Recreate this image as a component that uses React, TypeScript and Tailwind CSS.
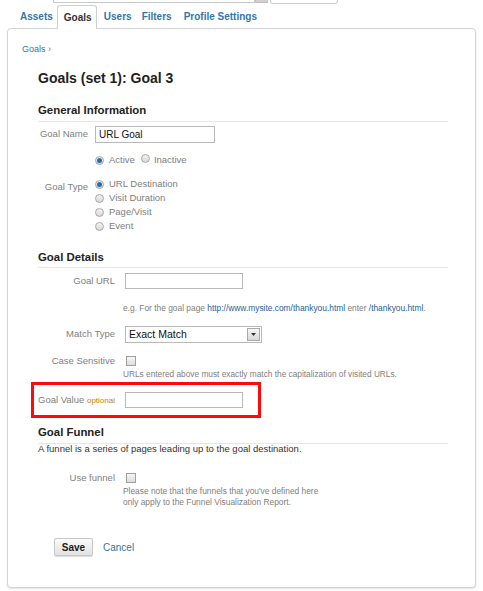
import React from "react";

const Radio = ({ on }: { on?: boolean }) => (
  <span className="inline-flex items-center justify-center w-[9px] h-[9px] rounded-full border border-[#a9a9a9] bg-gradient-to-b from-[#f4f4f4] to-[#d6d6d6] shrink-0">
    {on && <span className="w-[5px] h-[5px] rounded-full bg-[#2a6ea8]" />}
  </span>
);

const Check = () => (
  <span className="inline-block w-[10px] h-[10px] border border-[#a0a0a0] bg-gradient-to-b from-[#f6f6f6] to-[#dcdcdc] shrink-0" />
);

const Input = ({ w, value }: { w: string; value?: string }) => (
  <div className={`${w} h-[16px] border border-[#b9b9b9] bg-white flex items-center px-[3px] text-[10px] text-[#111]`}>
    {value}
  </div>
);

export default function App() {
  return (
    <div className="w-[483px] h-[591px] bg-white overflow-hidden font-['Liberation_Sans',Arial,sans-serif]">
      {/* top partial strip */}
      <div className="h-[5px] flex items-start pl-[53px]">
        <div className="w-[202px] h-[3px] border border-t-0 border-[#c8c8c8]" />
        <div className="w-[13px] h-[3px] bg-[#d0d0d0] border border-t-0 border-[#c0c0c0]" />
        <div className="ml-[2px] w-[68px] h-[4px] border border-t-0 border-[#cfcfcf] rounded-b-[3px]" />
      </div>
      {/* tabs */}
      <div className="h-[23px] flex items-end pl-[20px] text-[10px] font-bold text-[#3575a9] relative z-10">
        <div className="h-[23px] flex items-center">Assets</div>
        <div className="ml-[4px] h-[24px] mb-[-1px] flex items-center px-[6px] w-[40px] border border-b-0 border-[#cfcfcf] rounded-t-[3px] bg-white text-[#333]">
          Goals
        </div>
        <div className="ml-[7px] h-[23px] flex items-center">Users</div>
        <div className="ml-[10px] h-[23px] flex items-center">Filters</div>
        <div className="ml-[12px] h-[23px] flex items-center">Profile Settings</div>
      </div>
      {/* panel */}
      <div className="ml-[7px] w-[469px] h-[560px] border border-[#d4d4d4] rounded-[4px] shadow-[0_1px_2px_rgba(0,0,0,0.12)] bg-white">
        <div className="pl-[14px] mt-[14px] h-[12px] leading-[12px] text-[9px] text-[#3575a9]">
          Goals <span className="text-[#777]">›</span>
        </div>
        <div className="pl-[30px] pr-[27px]">
          <div className="mt-[14px] h-[18px] leading-[18px] text-[14px] font-bold text-[#222]">
            Goals (set 1): Goal 3
          </div>

          {/* General Information */}
          <div className="mt-[16px] pb-[4px] border-b border-[#e6e6e6]">
            <div className="h-[14px] leading-[14px] text-[11.4px] font-bold text-[#222]">General Information</div>
          </div>
          <div className="mt-[4px] flex items-center h-[17px]">
            <div className="w-[50px] text-right text-[9.5px] text-[#808080] whitespace-nowrap">Goal Name</div>
            <div className="ml-[7px]">
              <Input w="w-[120px] h-[17px]" value="URL Goal" />
            </div>
          </div>
          <div className="mt-[11px] h-[12px] flex items-center pl-[57px] text-[9.5px] text-[#808080]">
            <Radio on />
            <span className="ml-[5px]">Active</span>
            <span className="ml-[6px]"><Radio /></span>
            <span className="ml-[4px]">Inactive</span>
          </div>
          <div className="mt-[11px] flex">
            <div className="w-[50px] text-right text-[9.5px] text-[#808080] pt-[3px] leading-[14px]">Goal Type</div>
            <div className="ml-[7px] flex flex-col text-[9.5px] text-[#808080]">
              {["URL Destination", "Visit Duration", "Page/Visit", "Event"].map((t, i) => (
                <div key={t} className="h-[14px] flex items-center">
                  <Radio on={i === 0} />
                  <span className="ml-[5px]">{t}</span>
                </div>
              ))}
            </div>
          </div>

          {/* Goal Details */}
          <div className="mt-[17px] pb-[3px] border-b border-[#e6e6e6]">
            <div className="h-[14px] leading-[14px] text-[11.4px] font-bold text-[#222]">Goal Details</div>
          </div>
          <div className="mt-[5px] flex items-center h-[16px]">
            <div className="w-[77px] text-right text-[9.5px] text-[#808080]">Goal URL</div>
            <div className="ml-[10px]">
              <Input w="w-[118px]" />
            </div>
          </div>
          <div className="mt-[14px] h-[10px] leading-[10px] pl-[85px] text-[8.4px] text-[#808080] whitespace-nowrap">
            e.g. For the goal page <span className="text-[#1d5f9c]">http://www.mysite.com/thankyou.html</span> enter{" "}
            <span className="text-[#1d5f9c]">/thankyou.html</span>.
          </div>
          <div className="mt-[13px] flex items-center h-[17px]">
            <div className="w-[77px] text-right text-[9.5px] text-[#808080]">Match Type</div>
            <div className="ml-[10px] w-[137px] h-[17px] border border-[#b9b9b9] flex items-center">
              <span className="flex-1 pl-[3px] text-[10.5px] text-[#111]">Exact Match</span>
              <span className="w-[13px] h-[13px] mr-[1px] border border-[#a9a9a9] bg-gradient-to-b from-[#f6f6f6] to-[#d8d8d8] flex items-center justify-center">
                <svg width="5" height="3" viewBox="0 0 5 3">
                  <path d="M0 0h5L2.5 3z" fill="#333" />
                </svg>
              </span>
            </div>
          </div>
          <div className="mt-[12px] flex items-center h-[12px]">
            <div className="w-[77px] text-right text-[9.5px] text-[#808080] whitespace-nowrap">Case Sensitive</div>
            <div className="ml-[11px]">
              <Check />
            </div>
          </div>
          <div className="mt-[2px] h-[10px] leading-[10px] pl-[85px] text-[8.3px] text-[#808080] whitespace-nowrap">
            URLs entered above must exactly match the capitalization of visited URLs.
          </div>
          <div className="mt-[3px] ml-[-7px] w-[230px] h-[36px] border-[3px] border-[#ff0a0a] flex items-center">
            <div className="w-[81px] pl-[4px] text-[9.5px] text-[#808080] whitespace-nowrap">
              Goal Value <span className="text-[8px] text-[#b8860b]">optional</span>
            </div>
            <div className="ml-[10px]">
              <Input w="w-[118px]" />
            </div>
          </div>

          {/* Goal Funnel */}
          <div className="mt-[7px] pb-[4px] border-b border-[#e6e6e6]">
            <div className="h-[14px] leading-[14px] text-[11.4px] font-bold text-[#222]">Goal Funnel</div>
          </div>
          <div className="h-[10px] leading-[10px] text-[9.5px] text-[#333] whitespace-nowrap">
            A funnel is a series of pages leading up to the goal destination.
          </div>
          <div className="mt-[18px] flex items-center h-[12px]">
            <div className="w-[77px] text-right text-[9.5px] text-[#808080]">Use funnel</div>
            <div className="ml-[11px]">
              <Check />
            </div>
          </div>
          <div className="mt-[2px] pl-[85px] text-[8.4px] leading-[11px] text-[#808080] whitespace-nowrap">
            Please note that the funnels that you've defined here
            <br />
            only apply to the Funnel Visualization Report.
          </div>
          <div className="mt-[30px] flex items-center pl-[16px]">
            <div className="w-[39px] h-[18px] border border-[#c8c8c8] rounded-[2px] bg-gradient-to-b from-[#fafafa] to-[#e2e2e2] shadow-[0_1px_1px_rgba(0,0,0,0.15)] flex items-center justify-center text-[10px] font-bold text-[#222]">
              Save
            </div>
            <div className="ml-[10px] text-[10px] text-[#3575a9]">Cancel</div>
          </div>
        </div>
      </div>
    </div>
  );
}
